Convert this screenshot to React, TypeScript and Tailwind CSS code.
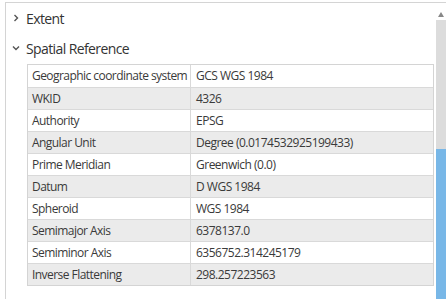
import React from "react";

const rows: [string, string][] = [
  ["Geographic coordinate system", "GCS WGS 1984"],
  ["WKID", "4326"],
  ["Authority", "EPSG"],
  ["Angular Unit", "Degree (0.0174532925199433)"],
  ["Prime Meridian", "Greenwich (0.0)"],
  ["Datum", "D WGS 1984"],
  ["Spheroid", "WGS 1984"],
  ["Semimajor Axis", "6378137.0"],
  ["Semiminor Axis", "6356752.314245179"],
  ["Inverse Flattening", "298.257223563"],
];

function Chevron({ down }: { down?: boolean }) {
  return (
    <svg width="8" height="8" viewBox="0 0 8 8" className="shrink-0">
      {down ? (
        <path d="M1 2.5 L4 5.5 L7 2.5" fill="none" stroke="#555" strokeWidth="1.4" />
      ) : (
        <path d="M2.5 1 L5.5 4 L2.5 7" fill="none" stroke="#555" strokeWidth="1.4" />
      )}
    </svg>
  );
}

export default function App() {
  return (
    <div
      className="w-[446px] h-[299px] bg-white overflow-hidden"
      style={{ fontFamily: '"Open Sans", "Noto Sans", sans-serif' }}
    >
      <div className="mt-[2px] ml-[5px] h-[297px] border-t border-l border-[#d4d4d4] flex">
        <div className="flex-1 flex flex-col">
          <div className="h-[30px] flex items-center pl-[6px] gap-[6px] text-[14px] text-[#333]">
            <Chevron />
            <span className="tracking-[-0.6px]">Extent</span>
          </div>
          <div className="h-[30px] flex items-center pl-[6px] gap-[6px] text-[14px] text-[#333]">
            <Chevron down />
            <span className="tracking-[-0.6px]">Spatial Reference</span>
          </div>
          <div className="ml-[21px] mr-[1px] mt-[1px] border border-[#d4d4d4] text-[12px] text-[#3a3a3a]">
            {rows.map(([k, v], i) => (
              <div
                key={k}
                className={`flex h-[22px] items-center ${i > 0 ? "border-t border-[#d9d9d9]" : ""} ${
                  i % 2 === 1 ? "bg-[#ebebeb]" : "bg-white"
                }`}
              >
                <div className="w-[163px] h-full flex items-center pl-[4px] border-r border-[#d9d9d9] tracking-[-0.55px] whitespace-nowrap">
                  {k}
                </div>
                <div className="flex-1 pl-[5px] tracking-[-0.5px] whitespace-nowrap">{v}</div>
              </div>
            ))}
          </div>
        </div>
        <div className="w-[10px] ml-[1px] flex flex-col">
          <div className="h-[17px] flex items-start justify-start pt-[9px] pl-[2px]">
            <svg width="6" height="5" viewBox="0 0 6 5">
              <path d="M0 5 L3 0 L6 5 Z" fill="#888" />
            </svg>
          </div>
          <div className="h-[129px] bg-[#dcdcdc]" />
          <div className="flex-1 bg-[#78b7e7]" />
        </div>
      </div>
    </div>
  );
}
